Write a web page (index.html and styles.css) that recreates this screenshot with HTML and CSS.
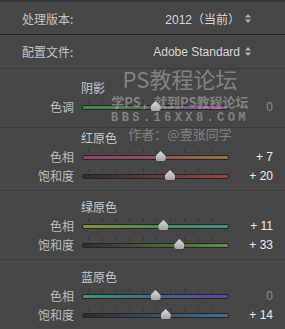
FILE: index.html
```html
<!DOCTYPE html>
<html lang="zh-CN">
<head>
    <meta charset="UTF-8">
    <meta name="viewport" content="width=device-width, initial-scale=1.0">
    <title>相机校准</title>
    <link rel="stylesheet" href="styles.css">
</head>
<body>
<div class="panel">
    <div class="topline"></div>

    <div class="setting">
        <span class="setting-label">处理版本:</span>
        <span class="setting-value">2012（当前）
            <svg class="updown" width="6" height="9" viewBox="0 0 6 9"><path d="M3 0 L6 3.5 H0 Z M0 5.5 H6 L3 9 Z"/></svg>
        </span>
    </div>
    <div class="setting divided">
        <span class="setting-label">配置文件:</span>
        <span class="setting-value">Adobe Standard
            <svg class="updown" width="6" height="9" viewBox="0 0 6 9"><path d="M3 0 L6 3.5 H0 Z M0 5.5 H6 L3 9 Z"/></svg>
        </span>
    </div>

    <div class="group shadows">
        <div class="group-title">阴影</div>
        <div class="slider-row">
            <span class="slider-label">色调</span>
            <div class="track tint"><span class="thumb" style="left: 50%"></span></div>
            <span class="slider-value zero">0</span>
        </div>
    </div>

    <div class="group red">
        <div class="group-title">红原色</div>
        <div class="slider-row">
            <span class="slider-label">色相</span>
            <div class="track red-hue"><span class="thumb" style="left: 53.5%"></span></div>
            <span class="slider-value">+ 7</span>
        </div>
        <div class="slider-row">
            <span class="slider-label">饱和度</span>
            <div class="track red-sat"><span class="thumb" style="left: 60%"></span></div>
            <span class="slider-value">+ 20</span>
        </div>
    </div>

    <div class="group green">
        <div class="group-title">绿原色</div>
        <div class="slider-row">
            <span class="slider-label">色相</span>
            <div class="track green-hue"><span class="thumb" style="left: 55.5%"></span></div>
            <span class="slider-value">+ 11</span>
        </div>
        <div class="slider-row">
            <span class="slider-label">饱和度</span>
            <div class="track green-sat"><span class="thumb" style="left: 66.5%"></span></div>
            <span class="slider-value">+ 33</span>
        </div>
    </div>

    <div class="group blue">
        <div class="group-title">蓝原色</div>
        <div class="slider-row">
            <span class="slider-label">色相</span>
            <div class="track blue-hue"><span class="thumb" style="left: 50%"></span></div>
            <span class="slider-value zero">0</span>
        </div>
        <div class="slider-row">
            <span class="slider-label">饱和度</span>
            <div class="track blue-sat"><span class="thumb" style="left: 57%"></span></div>
            <span class="slider-value">+ 14</span>
        </div>
    </div>

    <!-- forum watermark stamped over the panel -->
    <div class="watermark">
        <div class="wm-title">PS教程论坛</div>
        <div class="wm-slogan">学PS，就到PS教程论坛</div>
        <div class="wm-url">BBS.16XX8.COM</div>
        <div class="wm-author">作者：@壹张同学</div>
    </div>
</div>
</body>
</html>
```

FILE: styles.css
```css
body {
    margin: 0;
    background-color: #474747;
    font-family: "Noto Sans CJK SC", "Liberation Sans", sans-serif;
    font-size: 12px;
    color: #c4c4c4;
}
.panel {
    position: relative;
    width: 285px;
    height: 329px;
    overflow: hidden;
}
.topline {
    height: 2px;
    background-color: #363636;
}
.setting {
    display: flex;
    justify-content: space-between;
    align-items: center;
    height: 32px;
    padding: 0 34px 0 22px;
}
.setting.divided {
    height: 33px;
    border-top: 1px solid #222222;
    border-bottom: 1px solid #3d3d3d;
}
.setting-value {
    display: flex;
    align-items: center;
    gap: 5px;
    font-family: "Liberation Sans", "Noto Sans CJK SC", sans-serif;
    color: #d6d6d6;
}
.updown {
    fill: #b0b0b0;
}
.group {
    border-bottom: 1px solid #3d3d3d;
}
.group.shadows {
    padding: 9px 0 11px;
}
.group.red {
    padding: 0 0 5px;
}
.group.green {
    padding: 6px 0 5px;
}
.group.blue {
    padding: 7px 0 0;
    border-bottom: none;
}
.group-title {
    height: 19px;
    line-height: 19px;
    padding-left: 81px;
    color: #c8c8c8;
}
.slider-row {
    display: grid;
    grid-template-columns: 74px 147px 1fr;
    column-gap: 8px;
    align-items: center;
    height: 19px;
    padding-right: 12px;
}
.slider-label {
    text-align: right;
    color: #bcbcbc;
}
.slider-value {
    text-align: right;
    font-family: "Liberation Sans", sans-serif;
    color: #ececec;
}
.slider-value.zero {
    color: #8c8c8c;
}
.track {
    position: relative;
    height: 3px;
    border: 1px solid #262626;
    border-radius: 2px;
    margin-top: 2px;
}
.track::before {
    content: "";
    position: absolute;
    left: 5px;
    right: 5px;
    top: -6px;
    height: 3px;
    background: repeating-linear-gradient(90deg, #343434 0, #343434 1px, transparent 1px, transparent 13.7px);
}
.thumb {
    position: absolute;
    top: -5px;
    width: 10px;
    height: 10px;
    margin-left: -5px;
    background: linear-gradient(#dcdcdc, #a4a4a4);
    clip-path: polygon(50% 0, 100% 50%, 100% 85%, 85% 100%, 15% 100%, 0 85%, 0 50%);
}
.tint { background: linear-gradient(90deg, #3f8f3f, #5a705a 45%, #756475 55%, #9a489c); }
.red-hue { background: linear-gradient(90deg, #93406e, #94505a 50%, #94723f); }
.red-sat { background: linear-gradient(90deg, #2e2e2e, #9c4242); }
.green-hue { background: linear-gradient(90deg, #85903f, #4c8c50 50%, #3f9090); }
.green-sat { background: linear-gradient(90deg, #2e2e2e, #5e943f); }
.blue-hue { background: linear-gradient(90deg, #3f9478, #3f6690 50%, #64429c); }
.blue-sat { background: linear-gradient(90deg, #2e2e2e, #3f7096); }
.watermark {
    position: absolute;
    left: 110px;
    top: 67px;
    width: 140px;
    text-align: center;
    color: rgba(195, 195, 195, 0.48);
    line-height: 1;
}
.wm-title {
    font-size: 22px;
    height: 28px;
}
.wm-slogan {
    font-size: 13px;
    font-weight: bold;
    height: 17px;
}
.wm-url {
    font-family: "Liberation Mono", monospace;
    font-size: 12px;
    font-weight: bold;
    letter-spacing: 3.4px;
    height: 15px;
}
.wm-author {
    font-size: 13px;
}
```
